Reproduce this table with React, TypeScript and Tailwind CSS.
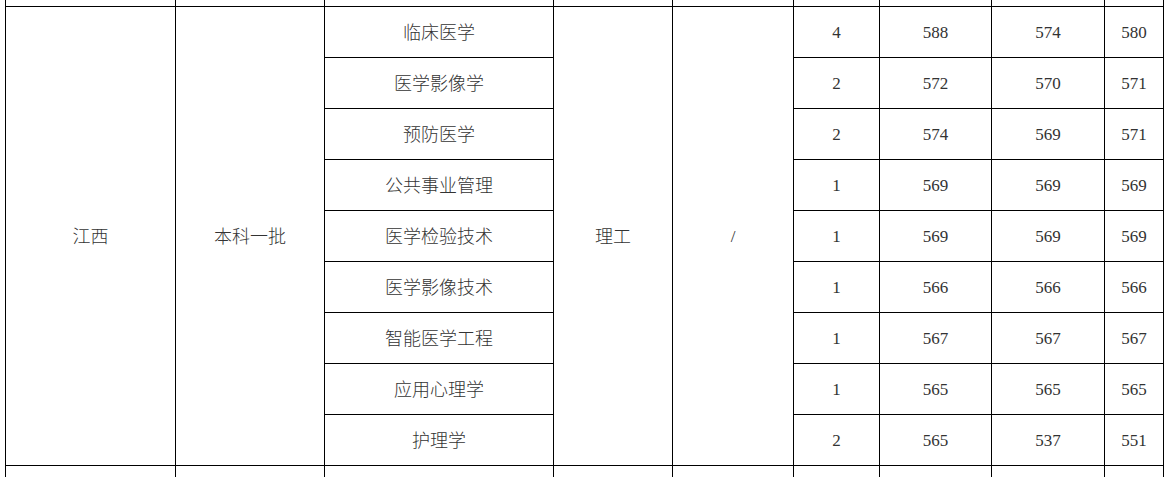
import React from "react";

const rows = [
  { major: "临床医学", count: "4", max: "588", min: "574", avg: "580" },
  { major: "医学影像学", count: "2", max: "572", min: "570", avg: "571" },
  { major: "预防医学", count: "2", max: "574", min: "569", avg: "571" },
  { major: "公共事业管理", count: "1", max: "569", min: "569", avg: "569" },
  { major: "医学检验技术", count: "1", max: "569", min: "569", avg: "569" },
  { major: "医学影像技术", count: "1", max: "566", min: "566", avg: "566" },
  { major: "智能医学工程", count: "1", max: "567", min: "567", avg: "567" },
  { major: "应用心理学", count: "1", max: "565", min: "565", avg: "565" },
  { major: "护理学", count: "2", max: "565", min: "537", avg: "551" },
];

const cell = "bg-white flex items-center justify-center pt-[2px]";
const cjk = "text-[18px]";

export default function App() {
  return (
    <div
      className="w-[1171px] h-[477px] overflow-hidden bg-white text-[17px] text-[#333] font-light"
      style={{ fontFamily: '"Liberation Serif", "Noto Sans CJK SC", serif' }}
    >
      <div className="ml-[5px] w-[1159px] grid grid-cols-[169px_148px_228px_118px_120px_85px_111px_112px_58px] grid-rows-[6px_repeat(9,50px)_11px] gap-px bg-black px-px">
        {/* previous row tail */}
        {Array.from({ length: 9 }).map((_, i) => (
          <div key={`t${i}`} className="bg-white" />
        ))}

        <div className={`${cell} ${cjk} row-span-9`}>江西</div>
        <div className={`${cell} ${cjk} row-span-9`}>本科一批</div>
        <div className={`${cell} ${cjk}`}>{rows[0].major}</div>
        <div className={`${cell} ${cjk} row-span-9`}>理工</div>
        <div className={`${cell} row-span-9`}>/</div>
        <div className={cell}>{rows[0].count}</div>
        <div className={cell}>{rows[0].max}</div>
        <div className={cell}>{rows[0].min}</div>
        <div className={cell}>{rows[0].avg}</div>

        {rows.slice(1).map((r) => (
          <React.Fragment key={r.major}>
            <div className={`${cell} ${cjk} col-start-3`}>{r.major}</div>
            <div className={`${cell} col-start-6`}>{r.count}</div>
            <div className={cell}>{r.max}</div>
            <div className={cell}>{r.min}</div>
            <div className={cell}>{r.avg}</div>
          </React.Fragment>
        ))}

        {/* next row head */}
        {Array.from({ length: 9 }).map((_, i) => (
          <div key={`b${i}`} className="bg-white" />
        ))}
      </div>
    </div>
  );
}
